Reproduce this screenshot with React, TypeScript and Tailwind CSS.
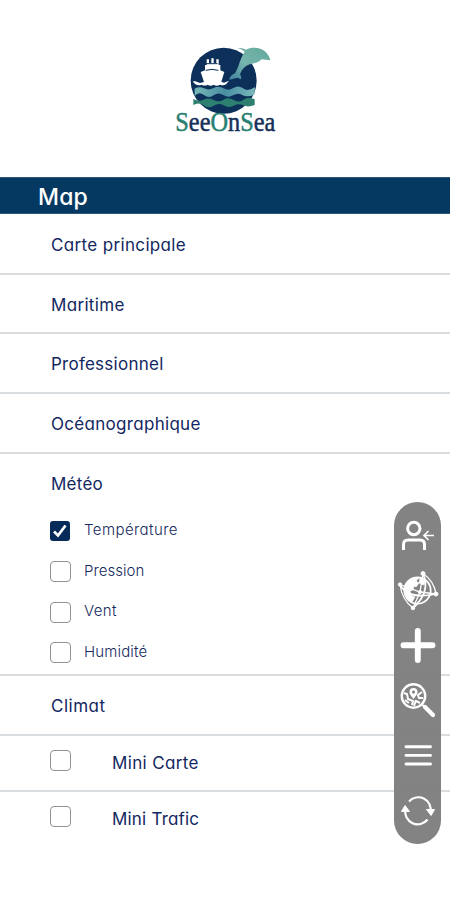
import React from "react";

const NAVY = "#172f58";
const GREEN = "#278071";

function Logo() {
  return (
    <svg width="120" height="105" viewBox="0 0 360 315" aria-label="SeeOnSea">
      <defs>
        <linearGradient id="dolphin" x1="1" y1="0" x2="0" y2="1">
          <stop offset="0" stopColor="#63a999" />
          <stop offset="0.55" stopColor="#76b5ae" />
          <stop offset="1" stopColor="#3f819c" />
        </linearGradient>
        <linearGradient id="wave" x1="0" x2="1">
          <stop offset="0" stopColor="#76b8b6" />
          <stop offset="0.5" stopColor="#4a8ea3" />
          <stop offset="1" stopColor="#79b9ba" />
        </linearGradient>
      </defs>
      <circle cx="176" cy="137" r="99" fill="#0c3059" />
      <path d="M89 161q14-8 28-1t29-1 30 1 29-1 29 1 36-4l-2 23q-22 9-36 1t-28 1-29-1-29 1-29-1-28 2z" fill="url(#wave)" />
      <path d="M85 192q17 9 31 2t30 1 30-1 30 1 30-1 33-1v17q-20 8-34 1t-29 1-30-1-30 1-30-1-31-1z" fill="#2d8070" />
      <path d="M91 139l14 5 12-3-10-30 13-5V90h5V73h7v11h7V70h7v14h8V73h7v17h5v16l12 5-9 29 8 3 15-6-8 10q-9 7-19 2-10 6-19 0-9 6-18 0-9 5-18 0-16 7-27-10z" fill="#fff" />
      <path d="M123 86h35M122 106q19-6 38 0" stroke="#0c3059" strokeWidth="3" fill="none" />
      <path d="M218 40q12-3 25 4c14-7 31-7 45-2 16 7 24 19 28 34l-26-3c-12 13-28 11-41 17-9 4-18 13-24 27 3 5 4 10 3 16-7-5-13-5-19-3-5 2-10 5-17 3 4-9 9-15 18-18 9-14 12-31 20-48 2-6 5-12 9-17-6-5-13-8-21-10z" fill="url(#dolphin)" />
      <text x="31" y="287" textLength="300" lengthAdjust="spacingAndGlyphs" fontFamily="'Liberation Serif', serif" fontSize="82" fill={NAVY} stroke={NAVY} strokeWidth="1.5">
        <tspan fill={GREEN} stroke={GREEN}>S</tspan>ee<tspan fill={GREEN} stroke={GREEN}>O</tspan>n<tspan fill={GREEN} stroke={GREEN}>S</tspan>ea
      </text>
    </svg>
  );
}

function Check({ checked = false }: { checked?: boolean }) {
  return checked ? (
    <span className="flex size-5 shrink-0 items-center justify-center rounded-[3px] bg-[#072b59]">
      <svg width="20" height="20" viewBox="0 0 20 20" fill="none" stroke="#fff" strokeWidth="2.7">
        <path d="M4 10.5l4 4 7.5-10" />
      </svg>
    </span>
  ) : (
    <span className="size-[21px] shrink-0 rounded-[4px] border-[1.5px] border-[#929292] bg-white" />
  );
}

const rowText = "text-[17px] font-normal";

function Row({ label, spacing }: { label: string; spacing: string }) {
  return (
    <div className="flex h-[59.8px] items-center border-b-2 border-[#d9dddf] pt-[3.4px] pl-[51px]">
      <span className={`${rowText} ${spacing}`}>{label}</span>
    </div>
  );
}

function Option({ label, spacing, checked }: { label: string; spacing: string; checked?: boolean }) {
  return (
    <div className="flex h-[40.7px] items-center pl-[50px]">
      <span className="flex w-[34px] justify-start"><Check checked={checked} /></span>
      <span className={`-mt-px text-[15px] font-light text-[#14295e] ${spacing}`}>{label}</span>
    </div>
  );
}

function MiniRow({ label, spacing, last }: { label: string; spacing: string; last?: boolean }) {
  return (
    <div className={`flex h-14 items-start pl-[50px] ${last ? "" : "border-b-2 border-[#d9dddf]"}`}>
      <span className="mt-3.5 flex w-[62px]"><Check /></span>
      <span className={`mt-[15px] leading-6 ${rowText} ${spacing}`}>{label}</span>
    </div>
  );
}

function Toolbar() {
  return (
    <div className="absolute top-[502px] left-[394px] h-[342px] w-[47px] rounded-full bg-[#7c7c7c]/95">
      <svg width="47" height="342" viewBox="394 502 47 342" fill="none" stroke="#fff">
        <g strokeWidth="3">
          <circle cx="413.8" cy="528.5" r="6.2" />
          <path d="M403.5 550v-5.5q0-4.5 4.5-4.5h12q4.5 0 4.5 4.5v5.5" />
          <path d="M434 535.5h-10M428.5 531l-4.5 4.5 4.5 4.5" strokeWidth="1.6" />
        </g>
        <g>
          <circle cx="417.5" cy="590.5" r="13.2" strokeWidth="1.7" />
          <path d="M405 587c1-7 7-10 14-9l-3 3 3 2-3 4-2-1-1 4-3 1 1 4 4 2-3 5c-5-3-8-8-7-15zM420 578l5 3-1 4-5-2z" fill="#fff" strokeWidth=".6" />
          <path d="M400 584.5Q408 600 436 594M423 573.5Q431 592 413 608" strokeWidth="1.7" />
          <path d="M400 584.5L420 592L436 594M423 573.5L420 592L413 608M423 573.5Q434 581 436 594M400 584.5Q402 600 413 608" strokeWidth="1.3" />
          <g fill="#fff" strokeWidth="1">
            <circle cx="400" cy="584.5" r="1.7" /><circle cx="423" cy="573.5" r="2" />
            <circle cx="436" cy="594" r="2" /><circle cx="413" cy="608" r="1.8" />
            <circle cx="420" cy="592" r="1.6" />
          </g>
        </g>
        <path d="M417.8 631v29M403.5 645.2h29" strokeWidth="5.9" strokeLinecap="round" />
        <g>
          <circle cx="413.5" cy="696" r="11.7" strokeWidth="2.4" />
          <path d="M422.5 705l3 3" strokeWidth="2" />
          <path d="M425 707l8 8" strokeWidth="4.2" strokeLinecap="round" />
          <path d="M413.5 699c-3-4-4-5-4-7a4 4 0 0 1 8 0c0 2-1 3-4 7z" fill="#fff" stroke="none" />
          <circle cx="413.5" cy="692" r="1.5" fill="#7c7c7c" stroke="none" />
          <path d="M404 693l3 1 1 5 5 2-1 4M405 700l4 3M422 692l-4 3 1 3 4 0M416 701l4 2M414 706l2-6" strokeWidth="2" />
        </g>
        <path d="M406 746.8h24.5M406 755.4h24.5M406 764h24.5" strokeWidth="2.9" strokeLinecap="round" />
        <g strokeWidth="2.2">
          <path d="M409 801.5a12.4 12.4 0 0 1 21.5 10.5M427.5 819.5a12.4 12.4 0 0 1-22-10" />
          <path d="M426.5 809.5h8l-3.4 6zM401.5 811.5h8l-4.5-6z" fill="#fff" strokeWidth="1" />
        </g>
      </svg>
    </div>
  );
}

export default function App() {
  return (
    <main className="relative h-[900px] w-[450px] overflow-hidden bg-white font-['Inter','Noto_Sans',sans-serif] text-[#12275f] [font-feature-settings:'cv11','ss03']">
      <header className="flex h-[177px] items-start pt-[35px] pl-[165px]"><Logo /></header>
      <div className="mb-[0.9px] flex h-[37px] items-center border-y border-[#32567d] bg-[#053962] pt-[3px] pl-[38px]">
        <h1 className="text-[23px] font-medium tracking-[0.2px] text-white">Map</h1>
      </div>
      <Row label="Carte principale" spacing="tracking-[0.35px]" />
      <Row label="Maritime" spacing="tracking-[0.33px]" />
      <Row label="Professionnel" spacing="tracking-[0.25px]" />
      <Row label="Océanographique" spacing="tracking-[0.3px]" />
      <section className="h-[221.9px] border-b-2 border-[#d9dddf] pt-[15px]">
        <h2 className={`mb-[11.3px] pl-[51px] leading-[30px] tracking-[0.25px] ${rowText}`}>Météo</h2>
        <div>
          <Option label="Température" checked spacing="tracking-[0.43px]" />
          <Option label="Pression" spacing="tracking-[0.05px]" />
          <Option label="Vent" spacing="tracking-[0.4px]" />
          <Option label="Humidité" spacing="tracking-[0.15px]" />
        </div>
      </section>
      <Row label="Climat" spacing="tracking-[0.5px]" />
      <MiniRow label="Mini Carte" spacing="tracking-[0.35px]" />
      <MiniRow label="Mini Trafic" spacing="tracking-[0.2px]" last />
      <Toolbar />
    </main>
  );
}
